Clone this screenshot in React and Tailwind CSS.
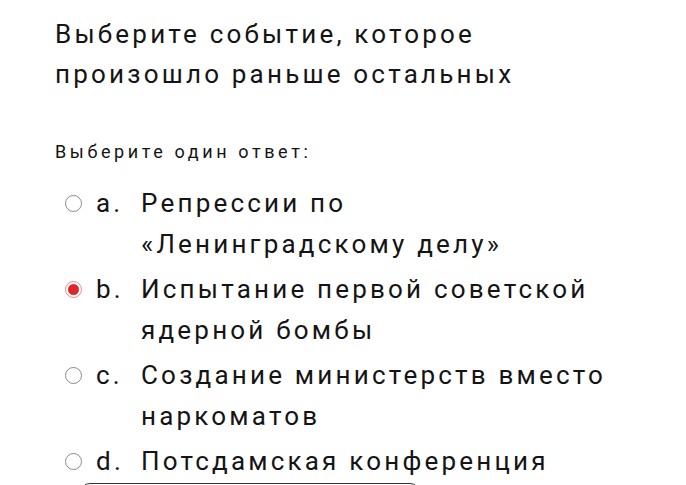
import React from 'react';

const options = [
  { key: 'a', text: 'Репрессии по «Ленинградскому делу»' },
  { key: 'b', text: 'Испытание первой советской ядерной бомбы' },
  { key: 'c', text: 'Создание министерств вместо наркоматов' },
  { key: 'd', text: 'Потсдамская конференция' },
];

const Radio = ({ checked }) =>
  checked ? (
    <span className="mt-[12px] flex h-[17px] w-[17px] shrink-0 items-center justify-center rounded-full border border-[#e88a8a] bg-white">
      <span className="h-[11px] w-[11px] rounded-full bg-[#e0262b]" />
    </span>
  ) : (
    <span className="mt-[12px] h-[17px] w-[17px] shrink-0 rounded-full border border-[#8a8a8a] bg-white" />
  );

export default function App() {
  return (
    <div className="min-h-screen bg-white text-[#141414]" style={{ fontFamily: 'Roboto, "Noto Sans", sans-serif' }}>
      <div className="w-[610px] pl-[55px] pt-[14px]">
        <h1 className="text-[26px] font-normal leading-[40px] tracking-[3.2px]">
          Выберите событие, которое произошло раньше остальных
        </h1>
        <p className="mt-[46px] text-[18px] leading-[24px] tracking-[3.6px]">Выберите один ответ:</p>
        <div className="mt-[19px] flex flex-col gap-[4px] pl-[10px]">
          {options.map((o) => (
            <label key={o.key} className="flex items-start">
              <Radio checked={o.key === 'b'} />
              <span className="ml-[14px] w-[45px] shrink-0 text-[26px] leading-[41px] tracking-[3.2px]">{o.key}.</span>
              <span className="text-[26px] leading-[41px] tracking-[3.2px]">{o.text}</span>
            </label>
          ))}
        </div>
        <div className="ml-[25px] mt-[1px] h-[40px] w-[340px] rounded-[10px] border border-[#333]" />
      </div>
    </div>
  );
}
